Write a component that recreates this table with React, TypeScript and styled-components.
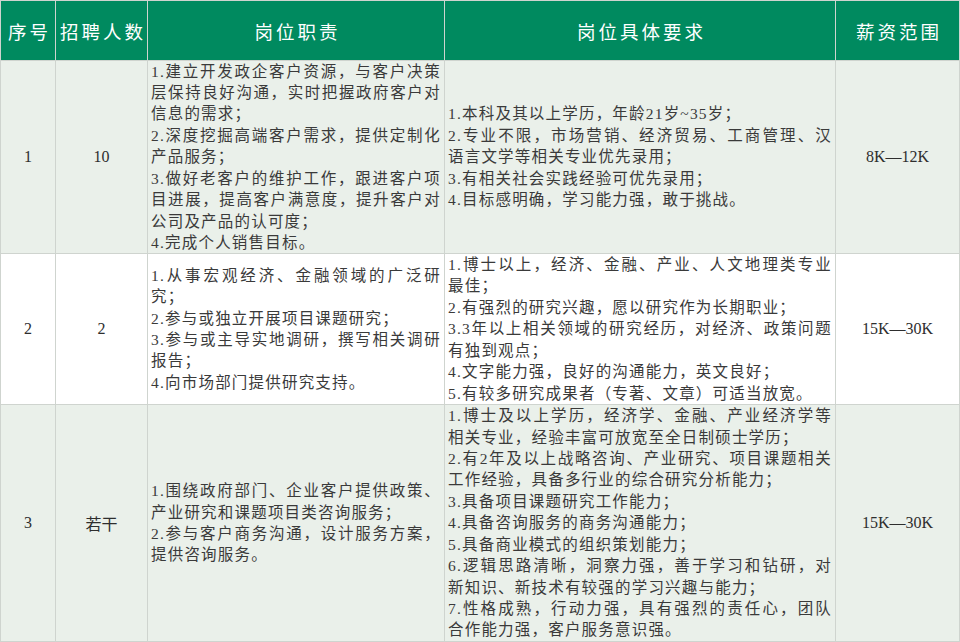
import React from 'react';
import styled, { createGlobalStyle } from 'styled-components';

const GlobalStyle = createGlobalStyle`
  html, body {
    margin: 0;
    padding: 0;
    background: #ffffff;
  }
  body {
    font-family: "Liberation Serif", "Noto Sans CJK SC", serif;
  }
`;

type Job = {
  id: string;
  count: string;
  duties: string[][];
  reqs: string[][];
  salary: string;
};

const jobs: Job[] = [
  {
    id: '1',
    count: '10',
    duties: [
      ['1.建立开发政企客户资源，与客户决策', '层保持良好沟通，实时把握政府客户对', '信息的需求；'],
      ['2.深度挖掘高端客户需求，提供定制化', '产品服务；'],
      ['3.做好老客户的维护工作，跟进客户项', '目进展，提高客户满意度，提升客户对', '公司及产品的认可度；'],
      ['4.完成个人销售目标。'],
    ],
    reqs: [
      ['1.本科及其以上学历，年龄21岁~35岁；'],
      ['2.专业不限，市场营销、经济贸易、工商管理、汉', '语言文学等相关专业优先录用；'],
      ['3.有相关社会实践经验可优先录用；'],
      ['4.目标感明确，学习能力强，敢于挑战。'],
    ],
    salary: '8K—12K',
  },
  {
    id: '2',
    count: '2',
    duties: [
      ['1.从事宏观经济、金融领域的广泛研', '究；'],
      ['2.参与或独立开展项目课题研究；'],
      ['3.参与或主导实地调研，撰写相关调研', '报告；'],
      ['4.向市场部门提供研究支持。'],
    ],
    reqs: [
      ['1.博士以上，经济、金融、产业、人文地理类专业', '最佳；'],
      ['2.有强烈的研究兴趣，愿以研究作为长期职业；'],
      ['3.3年以上相关领域的研究经历，对经济、政策问题', '有独到观点；'],
      ['4.文字能力强，良好的沟通能力，英文良好；'],
      ['5.有较多研究成果者（专著、文章）可适当放宽。'],
    ],
    salary: '15K—30K',
  },
  {
    id: '3',
    count: '若干',
    duties: [
      ['1.围绕政府部门、企业客户提供政策、', '产业研究和课题项目类咨询服务；'],
      ['2.参与客户商务沟通，设计服务方案，', '提供咨询服务。'],
    ],
    reqs: [
      ['1.博士及以上学历，经济学、金融、产业经济学等', '相关专业，经验丰富可放宽至全日制硕士学历；'],
      ['2.有2年及以上战略咨询、产业研究、项目课题相关', '工作经验，具备多行业的综合研究分析能力；'],
      ['3.具备项目课题研究工作能力；'],
      ['4.具备咨询服务的商务沟通能力；'],
      ['5.具备商业模式的组织策划能力；'],
      ['6.逻辑思路清晰，洞察力强，善于学习和钻研，对', '新知识、新技术有较强的学习兴趣与能力；'],
      ['7.性格成熟，行动力强，具有强烈的责任心，团队', '合作能力强，客户服务意识强。'],
    ],
    salary: '15K—30K',
  },
];

const Table = styled.div`
  display: grid;
  grid-template-columns: 54px 91px 296px 390px 1fr;
  grid-template-rows: 59px 192px 150px 236px;
  gap: 1px;
  padding: 1px;
  width: 960px;
  height: 642px;
  box-sizing: border-box;
  background: #cfd4cf;
`;

const HeadCell = styled.div`
  display: flex;
  align-items: center;
  justify-content: center;
  background: #008a5f;
  color: #ffffff;
  font-size: 18.5px;
  letter-spacing: 3px;
  padding-left: 3px;
  white-space: nowrap;
`;

const Cell = styled.div<{ $shade: boolean; $center?: boolean }>`
  display: flex;
  flex-direction: column;
  justify-content: center;
  align-items: ${(p) => (p.$center ? 'center' : 'stretch')};
  background: ${(p) => (p.$shade ? '#eaf0ea' : '#ffffff')};
  color: #3a3a3a;
  padding: 0 3px 0 3px;
  overflow: visible;
`;

const Figure = styled.span`
  font-size: 16px;
  color: #2e2e2e;
`;

// one visual line; lines that run on into the next are spread to the full width
const Line = styled.div<{ $full: boolean }>`
  font-size: 15.5px;
  line-height: 21.4px;
  letter-spacing: 1.2px;
  white-space: nowrap;
  text-align: justify;
  text-align-last: ${(p) => (p.$full ? 'justify' : 'left')};
`;

const Lines = ({ items }: { items: string[][] }) => (
  <>
    {items.map((item, i) =>
      item.map((text, j) => (
        <Line key={`${i}-${j}`} $full={j < item.length - 1}>
          {text}
        </Line>
      ))
    )}
  </>
);

const headers = ['序号', '招聘人数', '岗位职责', '岗位具体要求', '薪资范围'];

export default function App() {
  return (
    <>
      <GlobalStyle />
      <Table>
        {headers.map((h) => (
          <HeadCell key={h}>{h}</HeadCell>
        ))}
        {jobs.map((job, idx) => {
          const shade = idx % 2 === 0;
          return (
            <React.Fragment key={job.id}>
              <Cell $shade={shade} $center>
                <Figure>{job.id}</Figure>
              </Cell>
              <Cell $shade={shade} $center>
                <Figure>{job.count}</Figure>
              </Cell>
              <Cell $shade={shade}>
                <Lines items={job.duties} />
              </Cell>
              <Cell $shade={shade}>
                <Lines items={job.reqs} />
              </Cell>
              <Cell $shade={shade} $center>
                <Figure>{job.salary}</Figure>
              </Cell>
            </React.Fragment>
          );
        })}
      </Table>
    </>
  );
}
